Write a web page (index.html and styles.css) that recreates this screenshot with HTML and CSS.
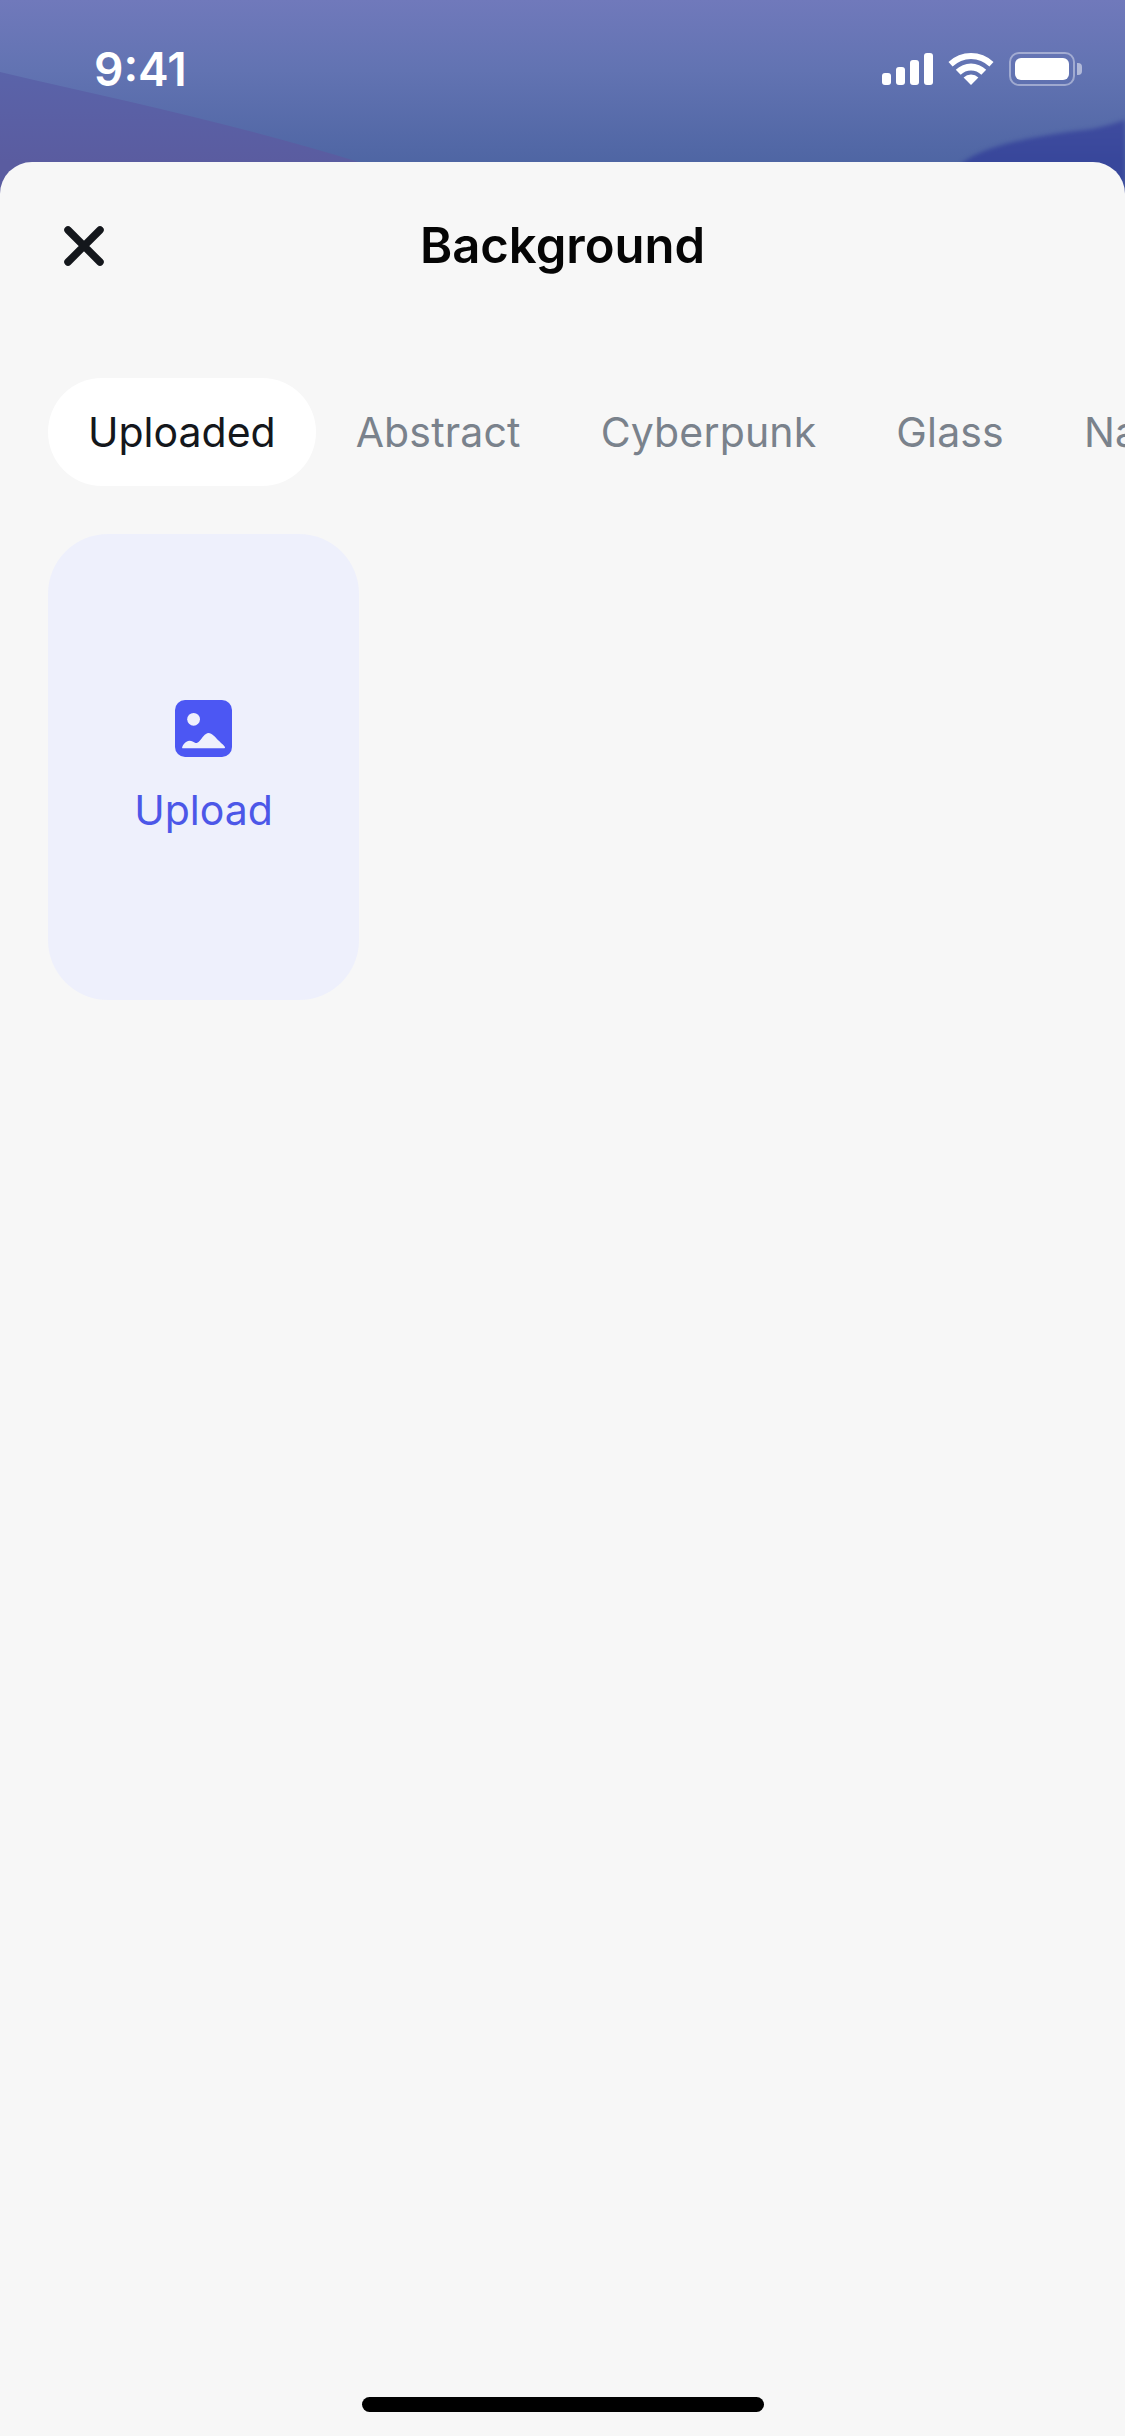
FILE: index.html
```html
<!DOCTYPE html>
<html lang="en">
<head>
<meta charset="utf-8">
<title>Background</title>
<link rel="stylesheet" href="styles.css">
</head>
<body>
<div class="screen">
  <svg class="wallpaper-shapes" viewBox="0 0 1125 200" width="1125" height="200" aria-hidden="true">
    <defs>
      <linearGradient id="leftFade" x1="0" y1="0" x2="0" y2="1">
        <stop offset="0" stop-color="#5a63a9"/>
        <stop offset="0.7" stop-color="#5a5ca0"/>
      </linearGradient>
      <linearGradient id="rightFade" x1="0" y1="0" x2="0" y2="1">
        <stop offset="0" stop-color="#3f4c9f"/>
        <stop offset="0.5" stop-color="#38479b"/>
        <stop offset="1" stop-color="#37469a"/>
      </linearGradient>
    </defs>
    <path class="shape-left" d="M0 72 C120 100 240 125 362 163 L362 200 L0 200 Z"/>
    <path class="shape-right" d="M962 163 C985 145 1040 135 1085 130 C1100 128 1112 124 1125 120 L1125 200 L962 200 Z"/>
  </svg>
  <header class="status-bar">
    <span class="time">9:41</span>
    <div class="status-icons">
      <svg class="signal" width="51" height="32" viewBox="0 0 51 32" aria-hidden="true">
        <rect x="0" y="20" width="9" height="12" rx="3"/>
        <rect x="14" y="14" width="9" height="18" rx="3"/>
        <rect x="28" y="7" width="9" height="25" rx="3"/>
        <rect x="42" y="0" width="9" height="32" rx="3"/>
      </svg>
      <svg class="wifi" width="46" height="33" viewBox="0 0 46 33" aria-hidden="true">
        <path d="M0.5 10 A32.5 32.5 0 0 1 45.5 10 L41.4 14.6 A26 26 0 0 0 4.6 14.6 Z"/>
        <path d="M7.8 17.8 A21.5 21.5 0 0 1 38.2 17.8 L33.3 22.7 A14.5 14.5 0 0 0 12.7 22.7 Z"/>
        <path d="M15.6 25.6 A10.5 10.5 0 0 1 30.4 25.6 L23 33 Z"/>
      </svg>
      <div class="battery">
        <div class="battery-body"><div class="battery-level"></div></div>
        <div class="battery-cap"></div>
      </div>
    </div>
  </header>
  <main class="sheet">
    <div class="sheet-header">
      <button class="close" aria-label="Close">
        <svg width="40" height="40" viewBox="0 0 40 40" aria-hidden="true">
          <path d="M4 4 L36 36 M36 4 L4 36"/>
        </svg>
      </button>
      <h1 class="title">Background</h1>
    </div>
    <nav class="tabs">
      <span class="tab tab-active">Uploaded</span>
      <span class="tab">Abstract</span>
      <span class="tab">Cyberpunk</span>
      <span class="tab">Glass</span>
      <span class="tab">Nature</span>
    </nav>
    <section class="grid">
      <div class="upload-card">
        <svg class="upload-icon" width="57" height="57" viewBox="0 0 57 57" aria-hidden="true">
          <rect class="icon-bg" width="57" height="57" rx="10"/>
          <circle class="icon-fg" cx="18.6" cy="19.3" r="6.4"/>
          <path class="icon-fg" d="M7.5 48.3 C6.8 48.3 7 46.5 8.5 44.5 C10.5 41.8 12.5 40.7 14.5 40.7 C16.8 40.7 18.5 42 20.5 43 C21.8 43.4 22.8 42.6 24.5 41 C27 38.5 30 33 33.5 33 C37 33 40 37 43.5 40.5 C46.5 43.5 50 46 50 47.5 C50 48.1 49.6 48.3 49 48.3 Z"/>
        </svg>
        <span class="upload-label">Upload</span>
      </div>
    </section>
    <div class="home-indicator"></div>
  </main>
</div>
</body>
</html>
```

FILE: styles.css
```css
* {
  box-sizing: border-box;
}

html,
body {
  margin: 0;
  padding: 0;
}

body {
  font-family: Inter, "Liberation Sans", sans-serif;
  background: #f7f7f7;
}

.screen {
  position: relative;
  width: 1125px;
  height: 2436px;
  overflow: hidden;
  display: flex;
  flex-direction: column;
  background: linear-gradient(180deg, #7079bb 0px, #6273b2 70px, #4e65a3 165px) no-repeat;
  background-size: 100% 200px;
}

.wallpaper-shapes {
  position: absolute;
  top: 0;
  left: 0;
}

.shape-left {
  fill: url(#leftFade);
}

.shape-right {
  fill: url(#rightFade);
  filter: blur(2px);
}

.status-bar {
  position: relative;
  height: 162px;
  flex: none;
  display: flex;
  justify-content: space-between;
  align-items: flex-start;
  padding: 52px 43px 0 94px;
  color: #fff;
}

.time {
  font-size: 46px;
  font-weight: 600;
  line-height: 34px;
}

.status-icons {
  display: flex;
  align-items: flex-start;
  gap: 15px;
}

.signal {
  margin-top: 1px;
  fill: #fff;
}

.wifi {
  fill: #fff;
}

.battery {
  display: flex;
  align-items: center;
  gap: 2px;
}

.battery-body {
  width: 66px;
  height: 34px;
  padding: 4px;
  border: 2px solid rgba(255, 255, 255, 0.4);
  border-radius: 10px;
}

.battery-level {
  width: 100%;
  height: 100%;
  background: #fff;
  border-radius: 6px;
}

.battery-cap {
  width: 5px;
  height: 12px;
  background: rgba(255, 255, 255, 0.5);
  border-radius: 0 4px 4px 0;
}

.sheet {
  position: relative;
  flex: 1;
  display: flex;
  flex-direction: column;
  background: #f7f7f7;
  border-radius: 32px 32px 0 0;
}

.sheet-header {
  height: 168px;
  flex: none;
  display: grid;
  grid-template-columns: 1fr auto 1fr;
  align-items: center;
  padding-left: 64px;
}

.close {
  width: 40px;
  height: 40px;
  padding: 0;
  border: 0;
  background: none;
  display: block;
}

.close svg {
  display: block;
  fill: none;
  stroke: #14171c;
  stroke-width: 7.5;
  stroke-linecap: round;
}

.title {
  margin: 0 0 0 -64px;
  font-size: 49px;
  font-weight: 600;
  line-height: 58px;
  color: #050505;
}

.tabs {
  display: flex;
  flex: none;
  height: 108px;
  padding-left: 48px;
  margin-top: 48px;
  overflow: hidden;
}

.tab {
  flex: none;
  display: flex;
  align-items: center;
  padding: 0 40px;
  border-radius: 54px;
  font-size: 41px;
  font-weight: 400;
  letter-spacing: 0.15px;
  color: #7a828c;
}

.tab-active {
  background: #fff;
  color: #14171c;
  letter-spacing: 0;
}

.grid {
  display: grid;
  grid-template-columns: 311px;
  padding: 48px 0 0 48px;
}

.upload-card {
  height: 466px;
  display: flex;
  flex-direction: column;
  align-items: center;
  padding-top: 166px;
  background: #eef0fc;
  border-radius: 60px;
}

.upload-icon {
  display: block;
}

.icon-bg {
  fill: #4c57f3;
}

.icon-fg {
  fill: #eef0fc;
}

.upload-label {
  margin-top: 29px;
  font-size: 41px;
  line-height: 48px;
  color: #4c57e8;
}

.home-indicator {
  width: 402px;
  height: 15px;
  margin: auto auto 24px;
  background: #000;
  border-radius: 8px;
}
```
